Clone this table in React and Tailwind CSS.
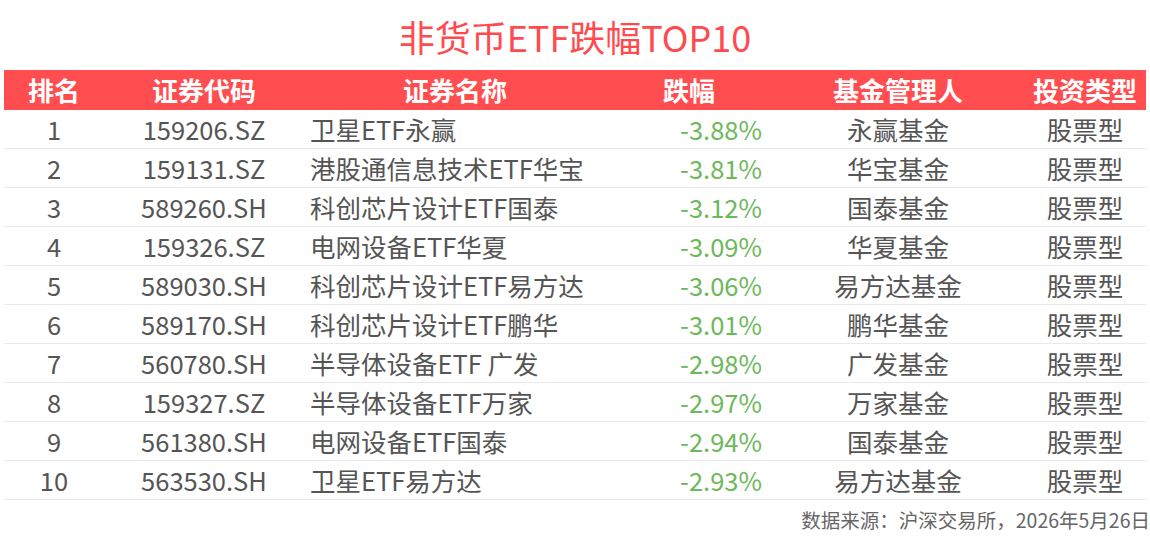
import React from 'react';

const rows = [
  ['1', '159206.SZ', '卫星ETF永赢', '-3.88%', '永赢基金'],
  ['2', '159131.SZ', '港股通信息技术ETF华宝', '-3.81%', '华宝基金'],
  ['3', '589260.SH', '科创芯片设计ETF国泰', '-3.12%', '国泰基金'],
  ['4', '159326.SZ', '电网设备ETF华夏', '-3.09%', '华夏基金'],
  ['5', '589030.SH', '科创芯片设计ETF易方达', '-3.06%', '易方达基金'],
  ['6', '589170.SH', '科创芯片设计ETF鹏华', '-3.01%', '鹏华基金'],
  ['7', '560780.SH', '半导体设备ETF 广发', '-2.98%', '广发基金'],
  ['8', '159327.SZ', '半导体设备ETF万家', '-2.97%', '万家基金'],
  ['9', '561380.SH', '电网设备ETF国泰', '-2.94%', '国泰基金'],
  ['10', '563530.SH', '卫星ETF易方达', '-2.93%', '易方达基金'],
];

const cols = 'grid grid-cols-[100px_200px_302px_166px_252px_122px]';

export default function App() {
  return (
    <div
      className="w-[1150px] h-[540px] bg-white overflow-hidden"
      style={{ fontFamily: '"Noto Sans CJK SC", "Noto Sans", sans-serif' }}
    >
      <h1 className="h-[70px] pt-[11px] text-center text-[36px] leading-[50px] text-[#ff4b4f]">
        非货币ETF跌幅TOP10
      </h1>

      <div className="mx-[4px]">
        <div className={`${cols} h-[40px] bg-[#ff4d50] text-white font-bold text-[26px] leading-[40px] text-center`}>
          <div>排名</div>
          <div>证券代码</div>
          <div>证券名称</div>
          <div>跌幅</div>
          <div>基金管理人</div>
          <div>投资类型</div>
        </div>

        {rows.map(([rank, code, name, pct, mgr]) => (
          <div
            key={rank}
            className={`${cols} h-[39px] border-b border-[#e8e8ee] text-[25.5px] leading-[38px] text-[#555555]`}
          >
            <div className="text-center">{rank}</div>
            <div className="text-center">{code}</div>
            <div className="pl-[6px] whitespace-nowrap">{name}</div>
            <div className="text-right pr-[10px] text-[#6cb85a]">{pct}</div>
            <div className="text-center">{mgr}</div>
            <div className="text-center">股票型</div>
          </div>
        ))}
      </div>

      <div className="text-right text-[19.5px] leading-[40px] text-[#666666] whitespace-nowrap">
        数据来源：沪深交易所，2026年5月26日
      </div>
    </div>
  );
}
